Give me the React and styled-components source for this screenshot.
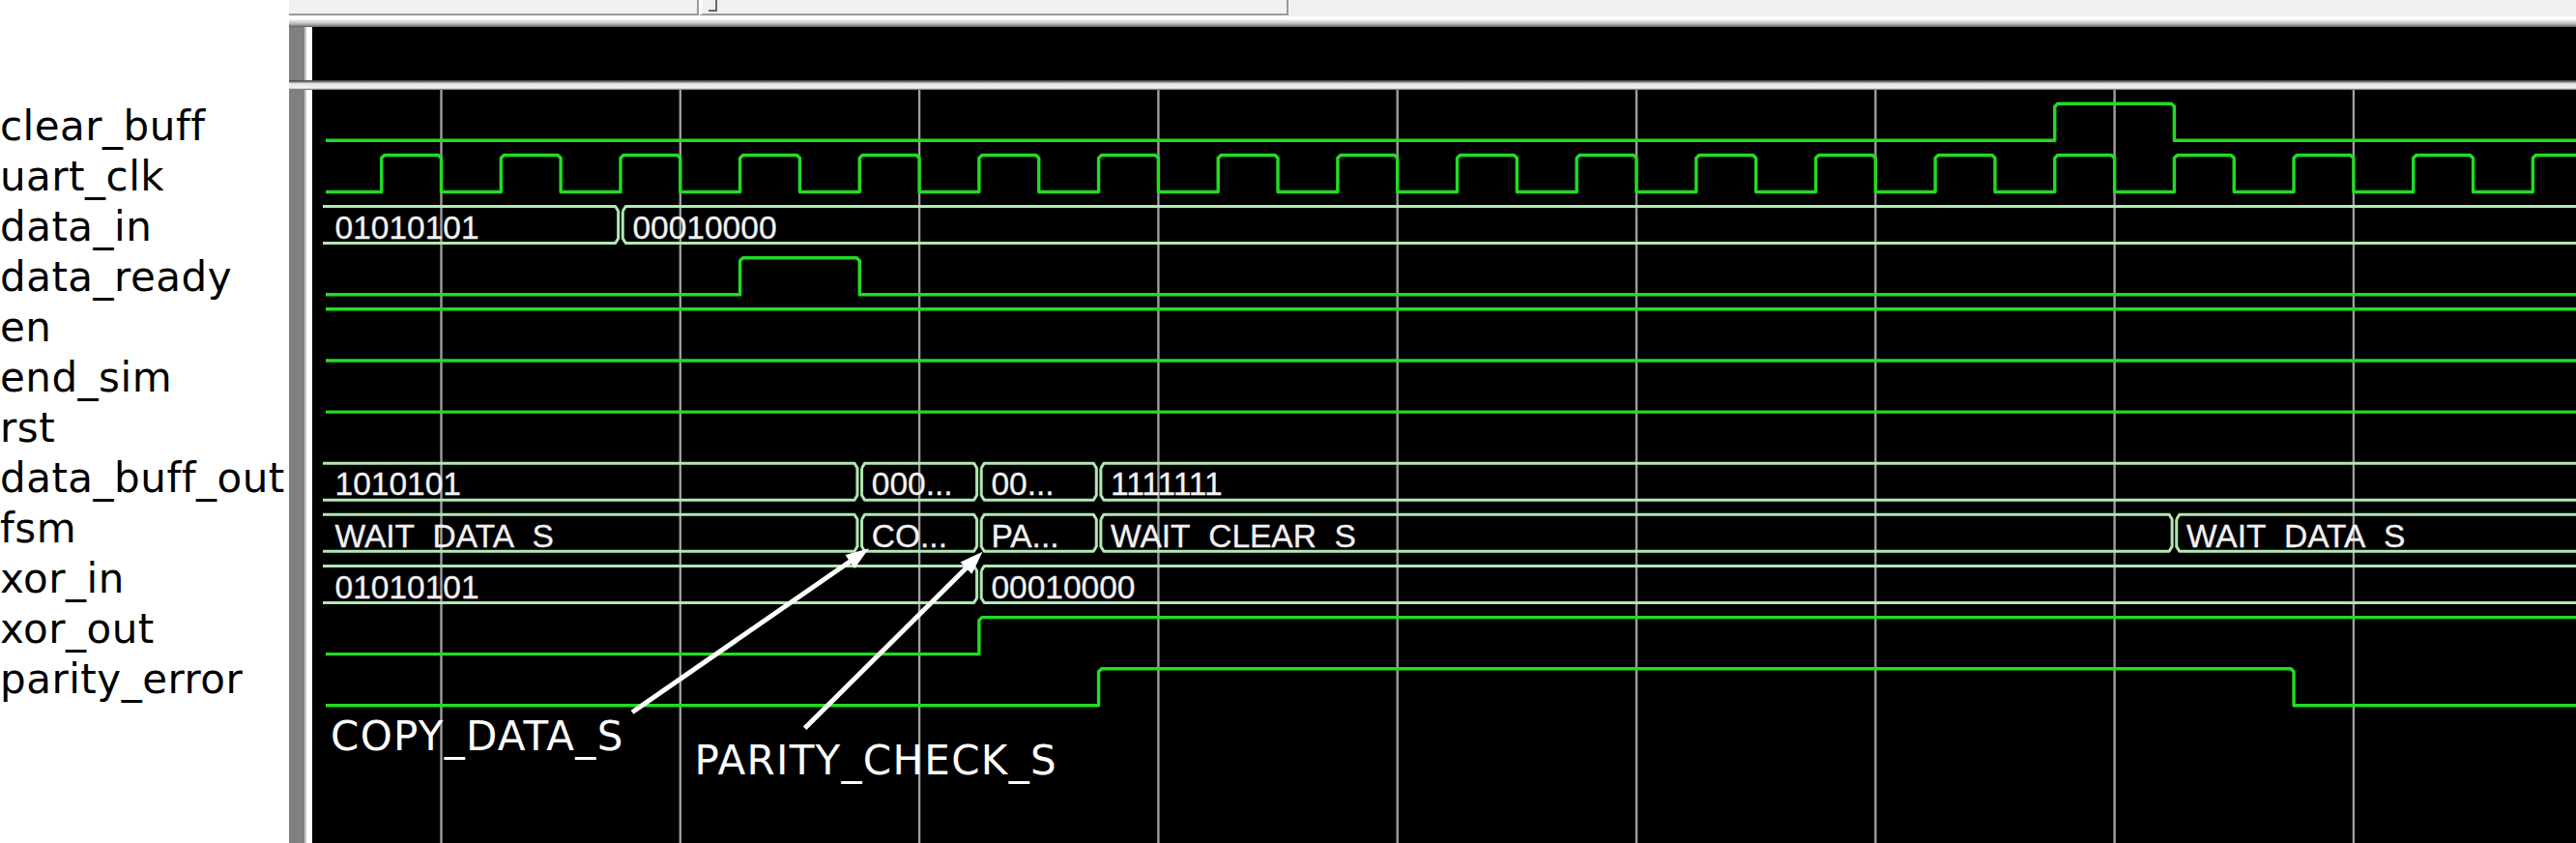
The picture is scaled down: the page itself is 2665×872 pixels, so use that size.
import React from "react";
import styled, { createGlobalStyle } from "styled-components";

const GlobalStyle = createGlobalStyle`
  html, body { margin: 0; padding: 0; background: #ffffff; }
  body { width: 2665px; height: 872px; overflow: hidden; }
  #root { width: 2665px; height: 872px; }
`;

const Page = styled.div`
  display: flex;
  width: 2665px;
  height: 872px;
  background: #ffffff;
  overflow: hidden;
`;

const LabelPanel = styled.ul`
  list-style: none;
  margin: 0;
  padding: 104.5px 0 0 0;
  width: 299px;
  flex: none;
  background: #ffffff;
  font-family: "DejaVu Sans", Verdana, sans-serif;
  font-size: 42px;
  line-height: 52px;
  letter-spacing: 0.5px;
  color: #000000;
`;

const Label = styled.li`
  white-space: nowrap;
`;

const RightSide = styled.div`
  flex: 1;
  min-width: 0;
  display: flex;
  flex-direction: column;
`;

const Toolbar = styled.div`
  height: 28px;
  flex: none;
  display: flex;
  align-items: flex-start;
  background: linear-gradient(
    to bottom,
    #f0f0f0 0,
    #f0f0f0 17px,
    #ffffff 17px,
    #ffffff 20px,
    #e6e6e6 21px,
    #c4c4c4 24px,
    #8a8a8a 26.5px,
    #555555 28px
  );
`;

const Field = styled.div`
  box-sizing: border-box;
  position: relative;
  width: ${(p) => p.$w}px;
  height: 16px;
  background: #f0f0f0;
  border-right: 2px solid #9a9a9a;
  border-bottom: 2px solid #9a9a9a;
  border-left: ${(p) => (p.$gap ? `${p.$gap}px solid #fafafa` : "none")};
  box-shadow: 0 1px 0 #fbfbfb;
`;

const CaretMark = styled.span`
  position: absolute;
  left: 6px;
  top: 0;
  box-sizing: border-box;
  width: 9px;
  height: 12px;
  border-right: 2px solid #6a6a6a;
  border-bottom: 2px solid #6a6a6a;
`;

const MainGrid = styled.div`
  flex: 1;
  min-height: 0;
  display: grid;
  grid-template-columns: 24px 1fr;
  grid-template-rows: 55px 10px 1fr;
`;

const SplitterCell = styled.div`
  background: linear-gradient(
    to right,
    #808080 0,
    #808080 16px,
    #c6c6c6 16px,
    #c6c6c6 18px,
    #ffffff 18px
  );
`;

const HeaderStrip = styled.div`
  background: #000000;
`;

const Separator = styled.div`
  grid-column: 1 / -1;
  background: linear-gradient(
    to bottom,
    #3a3a3a 0,
    #8c8c8c 2px,
    #e4e4e4 3.5px,
    #f2f2f2 8px,
    #a8a8a8 9.2px,
    #444444 10px
  );
`;

const WaveCanvas = styled.div`
  position: relative;
  background: #000000;
  overflow: hidden;
`;

const WaveSvg = styled.svg`
  display: block;
`;

const BusText = styled.text`
  font-family: "Liberation Sans", Arial, sans-serif;
  font-size: 33.5px;
  fill: #f2f2f2;
  stroke: #f2f2f2;
  stroke-width: 0.3px;
`;

const Callout = styled.div`
  position: absolute;
  left: ${(p) => p.$x}px;
  top: ${(p) => p.$y}px;
  font-family: "DejaVu Sans", Verdana, sans-serif;
  font-size: 42px;
  line-height: 42px;
  letter-spacing: 1.3px;
  color: #ffffff;
  white-space: nowrap;
`;

/* ---------- waveform geometry (canvas coords: origin at page x=323, y=93) ---------- */
const OX = 323;
const OY = 93;
const W = 2665 - OX;
const H = 872 - OY;
const PITCH = 53.13;
const hi = (i) => 107.3 - OY + PITCH * i;
const lo = (i) => hi(i) + 38;
const F = (k) => 456.5 + 123.65 * k - OX; // falling clock edges
const R = (k) => F(k) - 61.83; // rising clock edges
const END = W + 10;
const SIG_START = 337 - OX;
const BUS_START = 334 - OX;

const clockEdges = [];
for (let k = 0; k < 20; k++) {
  if (R(k) < END) clockEdges.push(R(k));
  if (F(k) < END) clockEdges.push(F(k));
}

const signals = [
  { name: "clear_buff", type: "bit", init: 0, edges: [R(14), R(15)] },
  { name: "uart_clk", type: "bit", init: 0, edges: clockEdges },
  { name: "data_in", type: "bus", segs: [[null, "01010101"], [R(2), "00010000"]] },
  { name: "data_ready", type: "bit", init: 0, edges: [R(3), R(4)] },
  { name: "en", type: "bit", init: 1, edges: [] },
  { name: "end_sim", type: "bit", init: 1, edges: [] },
  { name: "rst", type: "bit", init: 1, edges: [] },
  {
    name: "data_buff_out",
    type: "bus",
    segs: [[null, "1010101"], [R(4), "000..."], [R(5), "00..."], [R(6), "1111111"]],
  },
  {
    name: "fsm",
    type: "bus",
    segs: [
      [null, "WAIT_DATA_S"],
      [R(4), "CO..."],
      [R(5), "PA..."],
      [R(6), "WAIT_CLEAR_S"],
      [R(15), "WAIT_DATA_S"],
    ],
  },
  { name: "xor_in", type: "bus", segs: [[null, "01010101"], [R(5), "00010000"]] },
  { name: "xor_out", type: "bit", init: 0, edges: [R(5)] },
  { name: "parity_error", type: "bit", init: 0, edges: [R(6), R(16)] },
];

const gridXs = [];
for (let i = 0; i < 9; i++) gridXs.push(456.5 + 247.3 * i - OX);

function bitPath(i, init, edges) {
  const Hy = hi(i);
  const Ly = lo(i);
  const b = 3;
  let v = init;
  let d = `M ${SIG_START} ${v ? Hy : Ly}`;
  for (const x of edges) {
    if (v === 0) d += ` L ${x} ${Ly} L ${x} ${Hy + b} L ${x + b} ${Hy}`;
    else d += ` L ${x - b} ${Hy} L ${x} ${Hy + b} L ${x} ${Ly}`;
    v = 1 - v;
  }
  d += ` L ${END} ${v ? Hy : Ly}`;
  return d;
}

function busSegments(i, segs) {
  const top = hi(i);
  const bot = lo(i);
  const c = 3;
  const e = 5;
  return segs.map(([t, text], j) => {
    const openLeft = t === null;
    const next = segs[j + 1];
    const openRight = !next;
    const a = openLeft ? BUS_START : t + 2.3;
    const b = openRight ? END : next[0] - 2.3;
    let d = openLeft ? `M ${a} ${top}` : `M ${a} ${top + e} L ${a + c} ${top}`;
    d += ` L ${openRight ? b : b - c} ${top}`;
    if (!openRight) d += ` L ${b} ${top + e} L ${b} ${bot - e} L ${b - c} ${bot}`;
    else d += ` M ${b} ${bot}`;
    d += ` L ${openLeft ? a : a + c} ${bot}`;
    if (!openLeft) d += ` L ${a} ${bot - e} L ${a} ${top + e}`;
    const tx = openLeft ? 334 + 12.5 - OX : t + 12.5;
    return { d, text, tx, ty: top + 33.2, a, b, top, bot, key: `${i}-${j}` };
  });
}

function arrow(x1, y1, x2, y2) {
  const dx = x2 - x1;
  const dy = y2 - y1;
  const len = Math.hypot(dx, dy);
  const ux = dx / len;
  const uy = dy / len;
  const hl = 24;
  const hw = 8.5;
  const bx = x2 - ux * hl;
  const by = y2 - uy * hl;
  const nx = -uy;
  const ny = ux;
  return {
    line: { x1, y1, x2: bx + ux * 2, y2: by + uy * 2 },
    head: `${x2},${y2} ${bx + nx * hw},${by + ny * hw} ${bx - nx * hw},${by - ny * hw}`,
  };
}

const arrows = [
  arrow(654 - OX, 736.7 - OY, 899 - OX, 567.3 - OY),
  arrow(832.6 - OX, 753.3 - OY, 1016.5 - OX, 570.7 - OY),
];

function Waveforms() {
  return (
    <WaveSvg width={W} height={H} viewBox={`0 0 ${W} ${H}`}>
      <defs>
        {signals.map((s, i) =>
          s.type === "bus"
            ? busSegments(i, s.segs).map((seg) => (
                <clipPath id={`clip-${seg.key}`} key={seg.key}>
                  <rect
                    x={seg.a + 3}
                    y={seg.top + 2}
                    width={Math.max(0, seg.b - seg.a - 6)}
                    height={seg.bot - seg.top - 4.5}
                  />
                </clipPath>
              ))
            : null
        )}
      </defs>
      {gridXs.map((x) => (
        <line key={x} x1={x} y1={0} x2={x} y2={H} stroke="#9e9e9e" strokeWidth="2.4" />
      ))}
      {signals.map((s, i) =>
        s.type === "bit" ? (
          <path
            key={s.name}
            d={bitPath(i, s.init, s.edges)}
            fill="none"
            stroke="#22dc22"
            strokeWidth="3.4"
            strokeLinejoin="round"
          />
        ) : (
          <g key={s.name}>
            {busSegments(i, s.segs).map((seg) => (
              <g key={seg.key}>
                <BusText x={seg.tx} y={seg.ty} clipPath={`url(#clip-${seg.key})`}>
                  {seg.text}
                </BusText>
                <path d={seg.d} fill="none" stroke="#b2e8b2" strokeWidth="3" strokeLinejoin="round" />
              </g>
            ))}
          </g>
        )
      )}
      {arrows.map((a, k) => (
        <g key={k}>
          <line {...a.line} stroke="#ffffff" strokeWidth="5" />
          <polygon points={a.head} fill="#ffffff" />
        </g>
      ))}
    </WaveSvg>
  );
}

export default function App() {
  return (
    <>
      <GlobalStyle />
      <Page>
        <LabelPanel>
          {signals.map((s) => (
            <Label key={s.name}>{s.name}</Label>
          ))}
        </LabelPanel>
        <RightSide>
          <Toolbar>
            <Field $w={424} />
            <Field $w={610} $gap={4}>
              <CaretMark />
            </Field>
          </Toolbar>
          <MainGrid>
            <SplitterCell />
            <HeaderStrip />
            <Separator />
            <SplitterCell />
            <WaveCanvas>
              <Waveforms />
              <Callout $x={19} $y={648.2}>COPY_DATA_S</Callout>
              <Callout $x={395.5} $y={673.2}>PARITY_CHECK_S</Callout>
            </WaveCanvas>
          </MainGrid>
        </RightSide>
      </Page>
    </>
  );
}
